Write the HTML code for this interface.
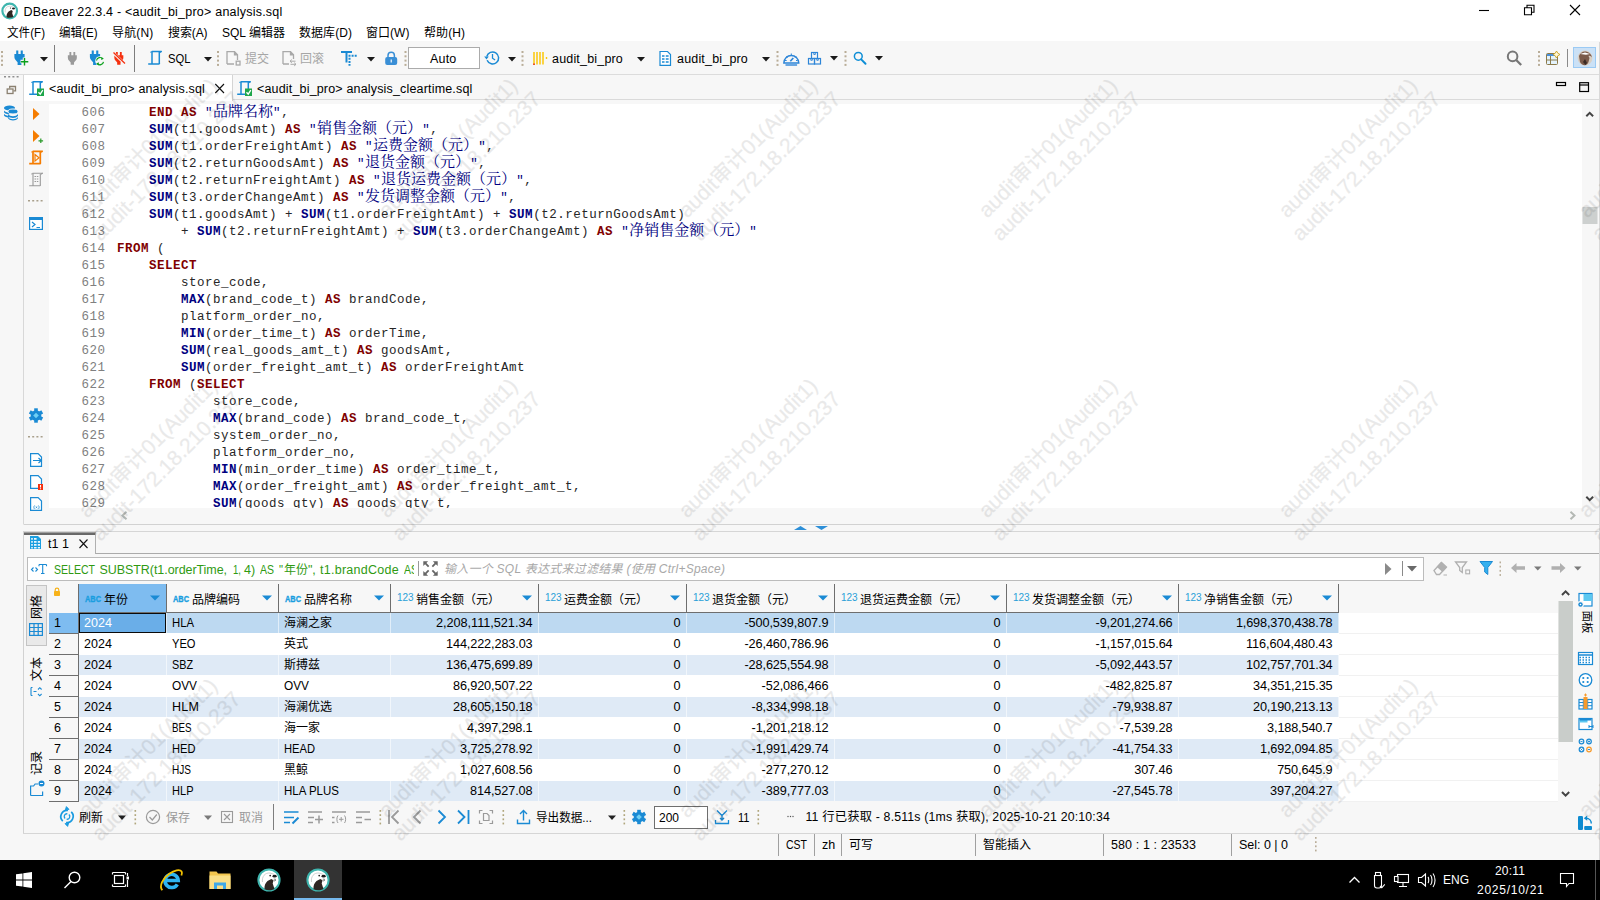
<!DOCTYPE html>
<html lang="zh">
<head>
<meta charset="utf-8">
<title>DBeaver 22.3.4 - &lt;audit_bi_pro&gt; analysis.sql</title>
<style>
*{box-sizing:border-box;margin:0;padding:0}
html,body{width:1600px;height:900px;overflow:hidden;background:#f7f7f7}
body{position:relative;font-family:"Liberation Sans","Noto Sans CJK SC",sans-serif;font-size:12.5px;color:#000}
.a{position:absolute}
.t{position:absolute;white-space:pre;line-height:16px;height:16px}
svg{position:absolute;overflow:visible}
#title{left:0;top:0;width:1600px;height:22px;background:#fff}
#menu{left:0;top:22px;width:1600px;height:19px;background:#fff}
#toolbarbg{left:0;top:41px;width:1600px;height:34px;background:#f7f7f7;border-bottom:1px solid #dcdcdc}
.g{color:#a0a0a0}
#tabs{left:24px;top:75px;width:1576px;height:25px;background:#f7f7f7;border-bottom:1px solid #dadada}
#tab1{left:24px;top:75px;width:209px;height:26px;background:#fff;border-right:1px solid #d4d4d4}
#editor{left:49px;top:104px;width:1533px;height:404px;background:#fff;overflow:hidden}
#code{font-family:"Liberation Mono","Noto Serif CJK SC",monospace;font-size:12.5px;letter-spacing:.5px;color:#262626}
.cl{position:absolute;left:0;height:17px;line-height:17px;white-space:pre;width:1500px}
.cl .n{display:inline-block;width:56.5px;text-align:right;color:#808080;margin-right:11.5px}
.k{color:#800000;font-weight:bold}
.f{color:#000080;font-weight:bold}
.s{color:#000080}
.z{font-family:"Noto Serif CJK SC",serif;font-size:15px;letter-spacing:0;line-height:0}
#taskbar{left:0;top:860px;width:1600px;height:40px;background:#000}
.wm{position:absolute;width:300px;height:60px;transform:rotate(-45deg);color:#000;-webkit-text-stroke:.28px #000;opacity:.082;font-size:21.2px;line-height:25.5px;white-space:pre;pointer-events:none;text-align:center;font-family:"Liberation Sans","Noto Sans CJK SC",sans-serif}

</style>
</head>
<body>
<div id="title" class="a">
<svg style="left:1px;top:2px" width="18" height="18" viewBox="0 0 18 18"><circle cx="8.700" cy="9" r="7.300" fill="#fff" stroke="#3fb5ae" stroke-width="2.200"/><path d="M5.600 15.200c-.2-2.400.5-4.300 2-5.700l2.600-1.400 1.500.8-.5 2.300 1.200 3.800c-2 1-4.800 1.100-6.800.2z" fill="#2e2622"/><ellipse cx="12.500" cy="6.400" rx="1.500" ry="1" fill="#1c1c1c"/><circle cx="9.500" cy="6" r=".6" fill="#1c1c1c"/><path d="M4.200 10.400c-.6-3.800 1.700-6.500 5.200-6.200l2.700.9" fill="none" stroke="#c4c4c4" stroke-width=".7"/></svg>
<span class="t" style="left:23.5px;top:4px;letter-spacing:0.208px;">DBeaver 22.3.4 - </span>
<span class="t" style="left:125px;top:4px;letter-spacing:0.222px;">&lt;audit_bi_pro&gt; analysis.sql</span>
<svg style="left:0;top:0" width="1600" height="22" viewBox="0 0 1600 22" fill="none" stroke="#000" stroke-width="1.100"><path d="M1479 10.500h10"/><path d="M1524.500 7.700h7v7h-7zM1527 7.700V5.200h7v7h-2.500"/><path d="M1570 5l10 10M1580 5l-10 10"/></svg>
</div>
<div id="menu" class="a">
<span class="t" style="left:7px;top:2.7px;font-size:12px;transform:scaleX(0.966);transform-origin:0 0;">文件(F)</span>
<span class="t" style="left:59px;top:2.7px;font-size:12px;transform:scaleX(0.963);transform-origin:0 0;">编辑(E)</span>
<span class="t" style="left:112px;top:2.7px;font-size:12px;letter-spacing:0.166px;">导航(N)</span>
<span class="t" style="left:168px;top:2.7px;font-size:12px;letter-spacing:-0.1px;">搜索(A)</span>
<span class="t" style="left:222px;top:2.7px;font-size:12px;letter-spacing:0.013px;">SQL 编辑器</span>
<span class="t" style="left:299px;top:2.7px;font-size:12px;letter-spacing:0.055px;">数据库(D)</span>
<span class="t" style="left:366px;top:2.7px;font-size:12px;letter-spacing:0.034px;">窗口(W)</span>
<span class="t" style="left:424px;top:2.7px;font-size:12px;letter-spacing:0.066px;">帮助(H)</span>
</div>
<div id="toolbarbg" class="a"></div>
<svg style="left:0;top:0" width="1600" height="75" viewBox="0 0 1600 75"><rect x="1" y="51.0" width="2" height="2" fill="#b9ad98"/><rect x="1" y="55.3" width="2" height="2" fill="#b9ad98"/><rect x="1" y="59.6" width="2" height="2" fill="#b9ad98"/><rect x="1" y="63.9" width="2" height="2" fill="#b9ad98"/><g transform="translate(14,50.500)"><path d="M2.200 0h2.100v3.600h2.400V0h2.100v3.600h1.800v3.200c0 2.400-2.200 3.400-3.200 5v2.700h-3.800v-2.700c-1-1.600-3.200-2.600-3.200-5V3.600h1.800z" fill="#1a8ad4"/></g><path d="M24.500 57.500v8M20.500 61.500h8" stroke="#f7f7f7" stroke-width="3.500"/><path d="M24.500 58v7.500M20.800 61.700h7.500" stroke="#0aa01c" stroke-width="1.400"/><path d="M40 57h8l-4 4.500z" fill="#1a1a1a"/><path d="M54.500 45v27M134.500 45v27" stroke="#7d7d7d" stroke-width="1"/><g transform="translate(67.500,52) scale(.88)"><path d="M2.200 0h2.100v3.600h2.400V0h2.100v3.600h1.800v3.200c0 2.400-2.200 3.400-3.200 5v2.700h-3.800v-2.700c-1-1.600-3.200-2.600-3.200-5V3.600h1.800z" fill="#9a9a9a"/></g><g transform="translate(89.500,50.500)"><path d="M2.200 0h2.100v3.600h2.400V0h2.100v3.600h1.800v3.200c0 2.400-2.200 3.400-3.200 5v2.700h-3.800v-2.700c-1-1.600-3.200-2.600-3.200-5V3.600h1.800z" fill="#1a8ad4"/></g><circle cx="100" cy="61" r="4.800" fill="#f7f7f7"/><path d="M96.500 60.500a3.600 3.600 0 0 1 6.300-1.700M103.500 61.800a3.600 3.600 0 0 1-6.300 1.700" fill="none" stroke="#0aa01c" stroke-width="1.200"/><path d="M101.500 57l2.300 1.800-2.700 1.200zM98.500 65.200l-2.300-1.800 2.700-1.200z" fill="#0aa01c"/><g transform="translate(114,52) scale(.88)"><path d="M2.200 0h2.100v3.600h2.400V0h2.100v3.600h1.800v3.200c0 2.400-2.200 3.400-3.200 5v2.700h-3.800v-2.700c-1-1.600-3.200-2.600-3.200-5V3.600h1.800z" fill="#f5300f"/></g><path d="M113 52.500l12.500 12" stroke="#f7f7f7" stroke-width="2.600"/><path d="M113.500 52.500l11.500 11" stroke="#f5300f" stroke-width="1.300"/><g transform="translate(148,50.7)" fill="none" stroke="#1a8ad4" stroke-width="1.5"><path d="M3.800 .8H13.500M4 1v11.800M11.300 1.500v11M.2 13.200h10.500c.6 0 .8-.4.800-1"/><path d="M3.800 .8c-.8 0-1 .5-1 1.200M13.800 .5l-2 1.300" stroke-width="1.100"/></g><path d="M204 57h8l-4 4.500z" fill="#1a1a1a"/><rect x="217" y="51.0" width="2" height="2" fill="#b9ad98"/><rect x="217" y="55.3" width="2" height="2" fill="#b9ad98"/><rect x="217" y="59.6" width="2" height="2" fill="#b9ad98"/><rect x="217" y="63.9" width="2" height="2" fill="#b9ad98"/><g fill="none" stroke="#a9a9a9" stroke-width="1.300"><path d="M227 64V51.700h7.500l3 3V60M227 64h7"/><path d="M234.500 51.700v3.200h3.200" fill="#a9a9a9"/><rect x="236.200" y="61.200" width="3.800" height="3.800"/></g><g fill="none" stroke="#a9a9a9" stroke-width="1.300"><path d="M283 64V51.700h7.500l3 3V59M283 64h6"/><path d="M290.500 51.700v3.200h3.200" fill="#a9a9a9"/><path d="M290 61.200h5.500M291.800 59.600l-1.800 1.600 1.800 1.600M296 64.300h-5.500M294.200 62.700l1.800 1.600-1.800 1.600" stroke-width="1"/></g><path d="M341 52h11M346.500 52v10.500" stroke="#1a8ad4" stroke-width="2" fill="none"/><path d="M348.500 55.800h8.500M349.500 57.800v8" stroke="#1a8ad4" stroke-width="2" stroke-dasharray="2 1.100" fill="none"/><path d="M367 57h8l-4 4.500z" fill="#1a1a1a"/><path d="M388 58v-2.500a3.200 3.200 0 0 1 6.400 0V58" fill="none" stroke="#3a8fd6" stroke-width="1.500"/><rect x="385.200" y="57" width="12" height="8" rx="2" fill="#3a8fd6"/><rect x="390.600" y="59.500" width="1.300" height="3" fill="#e8f2fb"/><rect x="404.5" y="51.0" width="2" height="2" fill="#b9ad98"/><rect x="404.5" y="55.3" width="2" height="2" fill="#b9ad98"/><rect x="404.5" y="59.6" width="2" height="2" fill="#b9ad98"/><rect x="404.5" y="63.9" width="2" height="2" fill="#b9ad98"/><rect x="408.500" y="47.500" width="71" height="21" fill="#fff" stroke="#ababab"/><g fill="none" stroke="#1a8ad4"><path d="M486.800 56.500a6 6 0 1 1 .3 3.800" stroke-width="1.500"/><path d="M492.500 54v4.200l2.600 1.800" stroke-width="1.300"/><path d="M484.200 56.500h4.600l-2.300 3z" fill="#1a8ad4" stroke="none"/></g><path d="M508 57h8l-4 4.500z" fill="#1a1a1a"/><rect x="521.5" y="51.0" width="2" height="2" fill="#b9ad98"/><rect x="521.5" y="55.3" width="2" height="2" fill="#b9ad98"/><rect x="521.5" y="59.6" width="2" height="2" fill="#b9ad98"/><rect x="521.5" y="63.9" width="2" height="2" fill="#b9ad98"/><path d="M534 52v12.500M537 52v12.500M540 52v12.500M543 52v12.500" stroke="#fcc80a" stroke-width="1.500"/><rect x="533.200" y="63.500" width="1.600" height="1.500" fill="#e8301a"/><rect x="545.800" y="57" width="1.400" height="2" fill="#fcc80a"/><path d="M637 57h8l-4 4.500z" fill="#1a1a1a"/><path d="M660 51.500h7.500l3 3v10.800h-10.500z" fill="#fff" stroke="#1a8ad4" stroke-width="1.200"/><path d="M662 56h2.500M662 59h2.500M662 62h2.500M665.800 56h2.800M665.800 59h2.800M665.800 62h2.800" stroke="#1a8ad4" stroke-width="1.300"/><path d="M762 57h8l-4 4.500z" fill="#1a1a1a"/><rect x="776.5" y="51.0" width="2" height="2" fill="#b9ad98"/><rect x="776.5" y="55.3" width="2" height="2" fill="#b9ad98"/><rect x="776.5" y="59.6" width="2" height="2" fill="#b9ad98"/><rect x="776.5" y="63.9" width="2" height="2" fill="#b9ad98"/><g fill="none" stroke="#2d85d8" stroke-width="1.400"><path d="M783.800 63a7.500 7.500 0 1 1 15 0z"/><path d="M785.500 65h11.600"/><path d="M791.300 53.500v2M786.300 56.300l1.200 1.200M796.300 56.300l-1.200 1.200M785 60.500h1.700M797.600 60.500H796" stroke-width="1"/><path d="M790.300 61.300l3-3.300" stroke-width="1.700"/></g><g fill="none" stroke="#2d85d8" stroke-width="1.200"><rect x="811.500" y="52.500" width="6" height="6"/><rect x="808.500" y="58.500" width="6" height="5.500"/><rect x="814.500" y="58.500" width="6" height="5.500"/><path d="M813.800 52.500v2h1.500v-2M810.800 58.500v1.800h1.500v-1.800M816.800 58.500v1.800h1.500v-1.800" stroke-width=".9"/></g><path d="M830 56h8l-4 4.500z" fill="#1a1a1a"/><rect x="844.5" y="51.0" width="2" height="2" fill="#b9ad98"/><rect x="844.5" y="55.3" width="2" height="2" fill="#b9ad98"/><rect x="844.5" y="59.6" width="2" height="2" fill="#b9ad98"/><rect x="844.5" y="63.9" width="2" height="2" fill="#b9ad98"/><circle cx="858.300" cy="56.300" r="3.900" fill="none" stroke="#0e8ed6" stroke-width="1.500"/><path d="M861.200 59.400l4.300 4.300" stroke="#0e8ed6" stroke-width="2" stroke-linecap="round"/><path d="M875 56h8l-4 4.500z" fill="#1a1a1a"/><circle cx="1512.600" cy="56.400" r="4.800" fill="none" stroke="#777" stroke-width="2"/><path d="M1516.200 60l5 5" stroke="#777" stroke-width="2.300"/><rect x="1538" y="51.0" width="2" height="2" fill="#b9ad98"/><rect x="1538" y="55.3" width="2" height="2" fill="#b9ad98"/><rect x="1538" y="59.6" width="2" height="2" fill="#b9ad98"/><rect x="1538" y="63.9" width="2" height="2" fill="#b9ad98"/><rect x="1546.500" y="53.500" width="11" height="11" rx="1" fill="#e4f3fc" stroke="#8c7a4a" stroke-width="1"/><rect x="1547" y="54" width="10" height="2" fill="#4a90d9"/><path d="M1550.500 56v8.500M1546.500 60h11" stroke="#8c7a4a" stroke-width="1"/><path d="M1556.500 51l1.300 2.200 2.200 1.300-2.200 1.300-1.300 2.200-1.300-2.200-2.200-1.300 2.200-1.300z" fill="#fff8d8" stroke="#c9a020" stroke-width=".9"/><path d="M1567.500 49v18" stroke="#8a8a8a" stroke-width="1"/><rect x="1573.500" y="47.500" width="22" height="20" fill="#cbe1f6" stroke="#9bcaf4" stroke-width="1"/><circle cx="1585" cy="58" r="7.400" fill="#d9cfc4"/><path d="M1579 56c1-3 4-5 7-4.500 3 .5 5.500 3 6 6-1-1.500-2.500-2-3.500-1.500l1 2-1 4c-.5 1.500-1.500 2.800-3.500 3.300-2.500-.3-4-1.500-5-3.300z" fill="#7a5a4a"/><path d="M1580 54l5-1.500 5 1.500-4 .8z" fill="#fff"/><path d="M1583 62l2-3 2 4-1.500 2z" fill="#3a2a24"/></svg>
<span class="t" style="left:167.5px;top:51px;transform:scaleX(0.899);transform-origin:0 0;">SQL</span>
<span class="t" style="left:245px;top:51px;font-size:12px;letter-spacing:-0.008px;color:#a6a6a6;">提交</span>
<span class="t" style="left:300px;top:51px;font-size:12px;letter-spacing:-0.008px;color:#a6a6a6;">回滚</span>
<span class="t" style="left:430px;top:51px;letter-spacing:0.195px;">Auto</span>
<span class="t" style="left:552px;top:51px;letter-spacing:0.182px;">audit_bi_pro</span>
<span class="t" style="left:677px;top:51px;letter-spacing:0.182px;">audit_bi_pro</span>
<div id="tabs" class="a"></div><div id="tab1" class="a"></div>
<div id="editor" class="a"><div id="code"><div class="cl" style="top:1px"><span class="n">606</span>    <span class="k">END</span> <span class="k">AS</span> <span class="s">"<span class="z">品牌名称</span>"</span>,</div>
<div class="cl" style="top:18px"><span class="n">607</span>    <span class="f">SUM</span>(t1.goodsAmt) <span class="k">AS</span> <span class="s">"<span class="z">销售金额（元）</span>"</span>,</div>
<div class="cl" style="top:35px"><span class="n">608</span>    <span class="f">SUM</span>(t1.orderFreightAmt) <span class="k">AS</span> <span class="s">"<span class="z">运费金额（元）</span>"</span>,</div>
<div class="cl" style="top:52px"><span class="n">609</span>    <span class="f">SUM</span>(t2.returnGoodsAmt) <span class="k">AS</span> <span class="s">"<span class="z">退货金额（元）</span>"</span>,</div>
<div class="cl" style="top:69px"><span class="n">610</span>    <span class="f">SUM</span>(t2.returnFreightAmt) <span class="k">AS</span> <span class="s">"<span class="z">退货运费金额（元）</span>"</span>,</div>
<div class="cl" style="top:86px"><span class="n">611</span>    <span class="f">SUM</span>(t3.orderChangeAmt) <span class="k">AS</span> <span class="s">"<span class="z">发货调整金额（元）</span>"</span>,</div>
<div class="cl" style="top:103px"><span class="n">612</span>    <span class="f">SUM</span>(t1.goodsAmt) + <span class="f">SUM</span>(t1.orderFreightAmt) + <span class="f">SUM</span>(t2.returnGoodsAmt)</div>
<div class="cl" style="top:120px"><span class="n">613</span>        + <span class="f">SUM</span>(t2.returnFreightAmt) + <span class="f">SUM</span>(t3.orderChangeAmt) <span class="k">AS</span> <span class="s">"<span class="z">净销售金额（元）</span>"</span></div>
<div class="cl" style="top:137px"><span class="n">614</span><span class="k">FROM</span> (</div>
<div class="cl" style="top:154px"><span class="n">615</span>    <span class="k">SELECT</span></div>
<div class="cl" style="top:171px"><span class="n">616</span>        store_code,</div>
<div class="cl" style="top:188px"><span class="n">617</span>        <span class="f">MAX</span>(brand_code_t) <span class="k">AS</span> brandCode,</div>
<div class="cl" style="top:205px"><span class="n">618</span>        platform_order_no,</div>
<div class="cl" style="top:222px"><span class="n">619</span>        <span class="f">MIN</span>(order_time_t) <span class="k">AS</span> orderTime,</div>
<div class="cl" style="top:239px"><span class="n">620</span>        <span class="f">SUM</span>(real_goods_amt_t) <span class="k">AS</span> goodsAmt,</div>
<div class="cl" style="top:256px"><span class="n">621</span>        <span class="f">SUM</span>(order_freight_amt_t) <span class="k">AS</span> orderFreightAmt</div>
<div class="cl" style="top:273px"><span class="n">622</span>    <span class="k">FROM</span> (<span class="k">SELECT</span></div>
<div class="cl" style="top:290px"><span class="n">623</span>            store_code,</div>
<div class="cl" style="top:307px"><span class="n">624</span>            <span class="f">MAX</span>(brand_code) <span class="k">AS</span> brand_code_t,</div>
<div class="cl" style="top:324px"><span class="n">625</span>            system_order_no,</div>
<div class="cl" style="top:341px"><span class="n">626</span>            platform_order_no,</div>
<div class="cl" style="top:358px"><span class="n">627</span>            <span class="f">MIN</span>(min_order_time) <span class="k">AS</span> order_time_t,</div>
<div class="cl" style="top:375px"><span class="n">628</span>            <span class="f">MAX</span>(order_freight_amt) <span class="k">AS</span> order_freight_amt_t,</div>
<div class="cl" style="top:392px"><span class="n">629</span>            <span class="f">SUM</span>(goods_qty) <span class="k">AS</span> goods_qty_t,</div></div></div>
<svg style="left:0;top:0" width="1600" height="535" viewBox="0 0 1600 535"><rect x="4.0" y="76" width="2" height="1.500" fill="#8f8f8f"/><rect x="8.2" y="76" width="2" height="1.500" fill="#8f8f8f"/><rect x="12.4" y="76" width="2" height="1.500" fill="#8f8f8f"/><rect x="16.6" y="76" width="2" height="1.500" fill="#8f8f8f"/><g fill="none" stroke="#8a8070" stroke-width="1.300"><path d="M9.700 88.500v-2h5.800v4.300h-2"/><rect x="7.200" y="89" width="5.800" height="4.500"/></g><g fill="#1a8ad4"><ellipse cx="9.500" cy="108" rx="5.500" ry="2.600"/><path d="M4 110.500c1 1.500 3 2 5.500 2v1.800c-2.500 0-4.500-.6-5.500-2zM4 113.800c1 1.500 3 2 5.500 2v1.800c-2.500 0-4.500-.6-5.500-2z"/><ellipse cx="13" cy="111.500" rx="5" ry="2.500" stroke="#f7f7f7" stroke-width="1"/><path d="M8 114c1 1.500 3 2.200 5 2.200s4-.7 5-2.200v1.800c-1 1.500-3 2.200-5 2.200s-4-.7-5-2.200zM8 117c1 1.500 3 2.200 5 2.200s4-.7 5-2.200v1.200c-1 1.500-3 2.200-5 2.200s-4-.7-5-2.200z"/></g><path d="M23.500 75V524" stroke="#d8d8d8" stroke-width="1"/><g transform="translate(29,81)" fill="none" stroke="#1a8ad4" stroke-width="1.5"><path d="M3.800 .8H13.500M4 1v11.800M11.300 1.500v11M.2 13.200h10.500c.6 0 .8-.4.800-1"/><path d="M3.800 .8c-.8 0-1 .5-1 1.200M13.800 .5l-2 1.300" stroke-width="1.100"/></g><rect x="37" y="88.5" width="7" height="7.500" fill="#1ea64a"/><path d="M38.5 92.2l1.700 1.900 2.600-4" fill="none" stroke="#fff" stroke-width="1.300"/><g transform="translate(237,81)" fill="none" stroke="#1a8ad4" stroke-width="1.5"><path d="M3.800 .8H13.500M4 1v11.800M11.300 1.500v11M.2 13.200h10.500c.6 0 .8-.4.800-1"/><path d="M3.800 .8c-.8 0-1 .5-1 1.200M13.800 .5l-2 1.300" stroke-width="1.100"/></g><rect x="245" y="88.5" width="7" height="7.500" fill="#1ea64a"/><path d="M246.5 92.2l1.700 1.900 2.600-4" fill="none" stroke="#fff" stroke-width="1.300"/><path d="M215.300 84l8.700 9M224 84l-8.700 9" stroke="#111" stroke-width="1.100" fill="none"/><rect x="1556.500" y="82.500" width="9" height="3" fill="none" stroke="#000" stroke-width="1.200"/><rect x="1579.700" y="82.700" width="8.800" height="8.800" fill="none" stroke="#000" stroke-width="1.200"/><path d="M1579.700 85h8.800" stroke="#000" stroke-width="1.200"/><path d="M33 108l6.500 6-6.500 6z" fill="#f57c00"/><path d="M33 130l6.500 6-6.500 6z" fill="#f57c00"/><path d="M40.800 138.500v4.500M38.500 140.800h4.600" stroke="#2a9a2a" stroke-width="1.200"/><g transform="translate(29,150.5)" fill="none" stroke="#f57c00" stroke-width="1.7"><path d="M3.800 .8H13.500M4 1v11.800M11.300 1.500v11M.2 13.200h10.500c.6 0 .8-.4.800-1"/><path d="M3.800 .8c-.8 0-1 .5-1 1.200M13.800 .5l-2 1.300" stroke-width="1.100"/></g><path d="M35 154.500l4 3.300-4 3.300z" fill="none" stroke="#f57c00" stroke-width="1.200"/><g transform="translate(29,172.5)" fill="none" stroke="#9a9a9a" stroke-width="1.1"><path d="M3.800 .8H13.500M4 1v11.800M11.300 1.500v11M.2 13.200h10.500c.6 0 .8-.4.800-1"/><path d="M3.800 .8c-.8 0-1 .5-1 1.200M13.800 .5l-2 1.300" stroke-width="1.100"/></g><path d="M34.500 176.500h4.500M34.500 179h4.500M34.500 181.500h4.500" stroke="#9a9a9a" stroke-width="1" stroke-dasharray="1.500 .8"/><rect x="28.0" y="200" width="2" height="1.500" fill="#a9a08c"/><rect x="32.2" y="200" width="2" height="1.500" fill="#a9a08c"/><rect x="36.4" y="200" width="2" height="1.500" fill="#a9a08c"/><rect x="40.6" y="200" width="2" height="1.500" fill="#a9a08c"/><rect x="29.600" y="217.600" width="12.800" height="11.800" fill="#fff" stroke="#1a8ad4" stroke-width="1.200"/><rect x="29" y="217" width="14" height="3" fill="#1a8ad4"/><path d="M32 222l3 2.500-3 2.500M36.500 227.500h3.500" fill="none" stroke="#1a8ad4" stroke-width="1.200"/><g transform="translate(36,415.500)" fill="#1a8ad4"><circle r="5.300"/><rect x="-1.800" y="-7.200" width="3.600" height="4" transform="rotate(0)"/><rect x="-1.800" y="-7.200" width="3.600" height="4" transform="rotate(60)"/><rect x="-1.800" y="-7.200" width="3.600" height="4" transform="rotate(120)"/><rect x="-1.800" y="-7.200" width="3.600" height="4" transform="rotate(180)"/><rect x="-1.800" y="-7.200" width="3.600" height="4" transform="rotate(240)"/><rect x="-1.800" y="-7.200" width="3.600" height="4" transform="rotate(300)"/><path d="M0-2.800l2.800 2.800-2.800 2.800-2.800-2.800z" fill="#6fd0f5"/></g><rect x="28.0" y="436" width="2" height="1.500" fill="#a9a08c"/><rect x="32.2" y="436" width="2" height="1.500" fill="#a9a08c"/><rect x="36.4" y="436" width="2" height="1.500" fill="#a9a08c"/><rect x="40.6" y="436" width="2" height="1.500" fill="#a9a08c"/><path d="M30.6 453.6h7.500l3.400 3.400v9.400h-10.900z" fill="#fff" stroke="#1a8ad4" stroke-width="1.200"/><path d="M33 460.500h8M38.500 458l2.800 2.500-2.800 2.500" fill="none" stroke="#1a8ad4" stroke-width="1.200"/><path d="M30.6 475.6h7.500l3.400 3.400v9.400h-10.900z" fill="#fff" stroke="#1a8ad4" stroke-width="1.200"/><rect x="38" y="484" width="5" height="6" fill="#f5300f"/><path d="M40.500 485v2.500M40.500 488.300v1" stroke="#fff" stroke-width="1.100"/><path d="M30.6 497.6h7.500l3.400 3.400v9.400h-10.900z" fill="#fff" stroke="#1a8ad4" stroke-width="1.200"/><path d="M34.500 505.500c-.8.800-.8 2.700 0 3.500M38.500 505.500c.8.800.8 2.700 0 3.500M35.700 506.500l1.600 1.600M37.300 506.500l-1.600 1.600" fill="none" stroke="#1a8ad4" stroke-width=".8"/><rect x="1582" y="104" width="16.500" height="404" fill="#f7f7f7"/><path d="M1586.300 116.300l3.400-3.400 3.400 3.400" fill="none" stroke="#444" stroke-width="2"/><path d="M1586.300 496.800l3.400 3.400 3.400-3.400" fill="none" stroke="#444" stroke-width="2"/><rect x="1582.500" y="207" width="15" height="17" fill="#cdd0cf"/><rect x="49" y="508" width="1533" height="16" fill="#f7f7f7"/><path d="M126.500 511.700l-4 3.800 4 3.800" fill="none" stroke="#b4b8b4" stroke-width="2"/><path d="M1570.500 511.700l4 3.800-4 3.800" fill="none" stroke="#b4b8b4" stroke-width="2"/><path d="M23.500 524.500H1599" stroke="#d2d2d2" stroke-width="1"/><path d="M1599.500 42V860" stroke="#d9d9d9" stroke-width="1"/><path d="M794 530l6.500-4 6.500 4zM815 526h13l-6.500 4z" fill="#2d8fd8"/></svg>
<span class="t" style="left:49px;top:81px;letter-spacing:0.167px;">&lt;audit_bi_pro&gt; analysis.sql</span>
<span class="t" style="left:257px;top:81px;letter-spacing:0.171px;">&lt;audit_bi_pro&gt; analysis_cleartime.sql</span>
<div class="a" style="left:24px;top:531px;width:1575px;height:1px;background:#d6d6d6"></div>
<div class="a" style="left:24px;top:532px;width:72px;height:22px;background:#f7f7f7;border-right:1px solid #b0b0b0"></div><div class="a" style="left:24px;top:532px;width:71px;height:3px;background:linear-gradient(#bdbdbd,#6a6a6a 45%,#666)"></div>
<div class="a" style="left:96px;top:553px;width:1503px;height:1px;background:#ababab"></div>
<div class="a" style="left:23px;top:531px;width:1px;height:303px;background:#d2d2d2"></div>
<div class="a" style="left:23px;top:833px;width:1577px;height:1px;background:#d6d6d6"></div>
<div class="a" style="left:27px;top:557px;width:1397px;height:24px;background:#fff;border:1px solid #bcbcbc"></div>
<div class="a" style="left:26px;top:585px;width:21px;height:61px;background:#e9e9e9;border:1px solid #c4c4c4"></div>
<div class="a" style="left:79px;top:613px;width:1479px;height:188px;background:#fff"></div>
<div class="a" style="left:79px;top:613px;width:1260px;height:20px;background:#bdd9f1"></div>
<div class="a" style="left:1339px;top:633px;width:219px;height:1px;background:#f1f1f1"></div>
<div class="a" style="left:1339px;top:654px;width:219px;height:1px;background:#f1f1f1"></div>
<div class="a" style="left:79px;top:655px;width:1260px;height:20px;background:#dfeaf6"></div>
<div class="a" style="left:1339px;top:675px;width:219px;height:1px;background:#f1f1f1"></div>
<div class="a" style="left:1339px;top:696px;width:219px;height:1px;background:#f1f1f1"></div>
<div class="a" style="left:79px;top:697px;width:1260px;height:20px;background:#dfeaf6"></div>
<div class="a" style="left:1339px;top:717px;width:219px;height:1px;background:#f1f1f1"></div>
<div class="a" style="left:1339px;top:738px;width:219px;height:1px;background:#f1f1f1"></div>
<div class="a" style="left:79px;top:739px;width:1260px;height:20px;background:#dfeaf6"></div>
<div class="a" style="left:1339px;top:759px;width:219px;height:1px;background:#f1f1f1"></div>
<div class="a" style="left:1339px;top:780px;width:219px;height:1px;background:#f1f1f1"></div>
<div class="a" style="left:79px;top:781px;width:1260px;height:20px;background:#dfeaf6"></div>
<div class="a" style="left:1339px;top:801px;width:219px;height:1px;background:#f1f1f1"></div>
<div class="a" style="left:166px;top:613px;width:1px;height:188px;background:rgba(255,255,255,.55)"></div>
<div class="a" style="left:278px;top:613px;width:1px;height:188px;background:rgba(255,255,255,.55)"></div>
<div class="a" style="left:390px;top:613px;width:1px;height:188px;background:rgba(255,255,255,.55)"></div>
<div class="a" style="left:538px;top:613px;width:1px;height:188px;background:rgba(255,255,255,.55)"></div>
<div class="a" style="left:686px;top:613px;width:1px;height:188px;background:rgba(255,255,255,.55)"></div>
<div class="a" style="left:834px;top:613px;width:1px;height:188px;background:rgba(255,255,255,.55)"></div>
<div class="a" style="left:1006px;top:613px;width:1px;height:188px;background:rgba(255,255,255,.55)"></div>
<div class="a" style="left:1178px;top:613px;width:1px;height:188px;background:rgba(255,255,255,.55)"></div>
<div class="a" style="left:1338px;top:613px;width:1px;height:188px;background:rgba(255,255,255,.55)"></div>
<div class="a" style="left:49px;top:612px;width:30px;height:190px;background:#f7f7f7;border-right:1px solid #6e6e6e"></div>
<div class="a" style="left:49px;top:613px;width:29px;height:20px;background:#7ebcf0"></div>
<div class="a" style="left:49px;top:633px;width:30px;height:1px;background:#6e6e6e"></div>
<div class="a" style="left:49px;top:654px;width:30px;height:1px;background:#6e6e6e"></div>
<div class="a" style="left:49px;top:675px;width:30px;height:1px;background:#6e6e6e"></div>
<div class="a" style="left:49px;top:696px;width:30px;height:1px;background:#6e6e6e"></div>
<div class="a" style="left:49px;top:717px;width:30px;height:1px;background:#6e6e6e"></div>
<div class="a" style="left:49px;top:738px;width:30px;height:1px;background:#6e6e6e"></div>
<div class="a" style="left:49px;top:759px;width:30px;height:1px;background:#6e6e6e"></div>
<div class="a" style="left:49px;top:780px;width:30px;height:1px;background:#6e6e6e"></div>
<div class="a" style="left:49px;top:801px;width:30px;height:1px;background:#6e6e6e"></div>
<div class="a" style="left:79px;top:584px;width:88px;height:28px;background:#7ebcf0"></div>
<div class="a" style="left:78px;top:584px;width:1261px;height:29px;border-bottom:1px solid #6e6e6e"></div>
<div class="a" style="left:78px;top:584px;width:1px;height:29px;background:#6e6e6e"></div>
<div class="a" style="left:166px;top:584px;width:1px;height:29px;background:#6e6e6e"></div>
<div class="a" style="left:278px;top:584px;width:1px;height:29px;background:#6e6e6e"></div>
<div class="a" style="left:390px;top:584px;width:1px;height:29px;background:#6e6e6e"></div>
<div class="a" style="left:538px;top:584px;width:1px;height:29px;background:#6e6e6e"></div>
<div class="a" style="left:686px;top:584px;width:1px;height:29px;background:#6e6e6e"></div>
<div class="a" style="left:834px;top:584px;width:1px;height:29px;background:#6e6e6e"></div>
<div class="a" style="left:1006px;top:584px;width:1px;height:29px;background:#6e6e6e"></div>
<div class="a" style="left:1178px;top:584px;width:1px;height:29px;background:#6e6e6e"></div>
<div class="a" style="left:1338px;top:584px;width:1px;height:29px;background:#6e6e6e"></div>
<div class="a" style="left:79px;top:613px;width:87px;height:20px;background:#6aaee8;border:1px solid #0a0a0a"></div>
<span class="t" style="left:85px;top:590.5px;font-size:9px;transform:scaleX(0.821);transform-origin:0 0;color:#1a9ee0;font-weight:bold;-webkit-text-stroke:.35px #1a9ee0;">ABC</span>
<span class="t" style="left:104px;top:591.5px;font-size:12px;letter-spacing:-0.008px;">年份</span>
<span class="t" style="left:173px;top:590.5px;font-size:9px;transform:scaleX(0.821);transform-origin:0 0;color:#1a9ee0;font-weight:bold;-webkit-text-stroke:.35px #1a9ee0;">ABC</span>
<span class="t" style="left:192px;top:591.5px;font-size:12px;letter-spacing:-0.004px;">品牌编码</span>
<span class="t" style="left:285px;top:590.5px;font-size:9px;transform:scaleX(0.821);transform-origin:0 0;color:#1a9ee0;font-weight:bold;-webkit-text-stroke:.35px #1a9ee0;">ABC</span>
<span class="t" style="left:304px;top:591.5px;font-size:12px;letter-spacing:-0.004px;">品牌名称</span>
<span class="t" style="left:397px;top:589.5px;font-size:10px;letter-spacing:-0.062px;color:#2a9fd8;">123</span>
<span class="t" style="left:416px;top:591.5px;font-size:12px;letter-spacing:-0.002px;">销售金额（元）</span>
<span class="t" style="left:545px;top:589.5px;font-size:10px;letter-spacing:-0.062px;color:#2a9fd8;">123</span>
<span class="t" style="left:564px;top:591.5px;font-size:12px;letter-spacing:-0.002px;">运费金额（元）</span>
<span class="t" style="left:693px;top:589.5px;font-size:10px;letter-spacing:-0.062px;color:#2a9fd8;">123</span>
<span class="t" style="left:712px;top:591.5px;font-size:12px;letter-spacing:-0.002px;">退货金额（元）</span>
<span class="t" style="left:841px;top:589.5px;font-size:10px;letter-spacing:-0.062px;color:#2a9fd8;">123</span>
<span class="t" style="left:860px;top:591.5px;font-size:12px;letter-spacing:-0.002px;">退货运费金额（元）</span>
<span class="t" style="left:1013px;top:589.5px;font-size:10px;letter-spacing:-0.062px;color:#2a9fd8;">123</span>
<span class="t" style="left:1032px;top:591.5px;font-size:12px;letter-spacing:-0.002px;">发货调整金额（元）</span>
<span class="t" style="left:1185px;top:589.5px;font-size:10px;letter-spacing:-0.062px;color:#2a9fd8;">123</span>
<span class="t" style="left:1204px;top:591.5px;font-size:12px;letter-spacing:-0.002px;">净销售金额（元）</span>
<span class="t" style="left:54px;top:614.5px;">1</span>
<span class="t" style="left:84px;top:614.5px;letter-spacing:0.047px;color:#fff;">2024</span>
<span class="t" style="left:172px;top:614.5px;transform:scaleX(0.904);transform-origin:0 0;">HLA</span>
<span class="t" style="left:284px;top:614.5px;font-size:12px;letter-spacing:-0.004px;">海澜之家</span>
<span class="t" style="left:435.9px;top:614.5px;font-size:12.7px;letter-spacing:-0.018px;">2,208,111,521.34</span>
<span class="t" style="left:673.5px;top:614.5px;font-size:12.7px;letter-spacing:-0.013px;">0</span>
<span class="t" style="left:744.4px;top:614.5px;font-size:12.7px;letter-spacing:-0.091px;">-500,539,807.9</span>
<span class="t" style="left:993.5px;top:614.5px;font-size:12.7px;letter-spacing:-0.013px;">0</span>
<span class="t" style="left:1095.5px;top:614.5px;font-size:12.7px;letter-spacing:-0.097px;">-9,201,274.66</span>
<span class="t" style="left:1235.9px;top:614.5px;font-size:12.7px;letter-spacing:-0.136px;">1,698,370,438.78</span>
<span class="t" style="left:54px;top:635.5px;">2</span>
<span class="t" style="left:84px;top:635.5px;letter-spacing:0.047px;">2024</span>
<span class="t" style="left:172px;top:635.5px;transform:scaleX(0.890);transform-origin:0 0;">YEO</span>
<span class="t" style="left:284px;top:635.5px;font-size:12px;letter-spacing:-0.008px;">英式</span>
<span class="t" style="left:446.0px;top:635.5px;font-size:12.7px;letter-spacing:-0.118px;">144,222,283.03</span>
<span class="t" style="left:673.5px;top:635.5px;font-size:12.7px;letter-spacing:-0.013px;">0</span>
<span class="t" style="left:744.4px;top:635.5px;font-size:12.7px;letter-spacing:-0.091px;">-26,460,786.96</span>
<span class="t" style="left:993.5px;top:635.5px;font-size:12.7px;letter-spacing:-0.013px;">0</span>
<span class="t" style="left:1095.5px;top:635.5px;font-size:12.7px;letter-spacing:-0.097px;">-1,157,015.64</span>
<span class="t" style="left:1246.0px;top:635.5px;font-size:12.7px;letter-spacing:-0.051px;">116,604,480.43</span>
<span class="t" style="left:54px;top:656.5px;">3</span>
<span class="t" style="left:84px;top:656.5px;letter-spacing:0.047px;">2024</span>
<span class="t" style="left:172px;top:656.5px;transform:scaleX(0.864);transform-origin:0 0;">SBZ</span>
<span class="t" style="left:284px;top:656.5px;font-size:12px;letter-spacing:-0.005px;">斯搏兹</span>
<span class="t" style="left:446.0px;top:656.5px;font-size:12.7px;letter-spacing:-0.118px;">136,475,699.89</span>
<span class="t" style="left:673.5px;top:656.5px;font-size:12.7px;letter-spacing:-0.013px;">0</span>
<span class="t" style="left:744.4px;top:656.5px;font-size:12.7px;letter-spacing:-0.091px;">-28,625,554.98</span>
<span class="t" style="left:993.5px;top:656.5px;font-size:12.7px;letter-spacing:-0.013px;">0</span>
<span class="t" style="left:1095.5px;top:656.5px;font-size:12.7px;letter-spacing:-0.097px;">-5,092,443.57</span>
<span class="t" style="left:1246.0px;top:656.5px;font-size:12.7px;letter-spacing:-0.118px;">102,757,701.34</span>
<span class="t" style="left:54px;top:677.5px;">4</span>
<span class="t" style="left:84px;top:677.5px;letter-spacing:0.047px;">2024</span>
<span class="t" style="left:172px;top:677.5px;transform:scaleX(0.947);transform-origin:0 0;">OVV</span>
<span class="t" style="left:284px;top:677.5px;transform:scaleX(0.947);transform-origin:0 0;">OVV</span>
<span class="t" style="left:453.0px;top:677.5px;font-size:12.7px;letter-spacing:-0.126px;">86,920,507.22</span>
<span class="t" style="left:673.5px;top:677.5px;font-size:12.7px;letter-spacing:-0.013px;">0</span>
<span class="t" style="left:761.5px;top:677.5px;font-size:12.7px;letter-spacing:-0.067px;">-52,086,466</span>
<span class="t" style="left:993.5px;top:677.5px;font-size:12.7px;letter-spacing:-0.013px;">0</span>
<span class="t" style="left:1105.5px;top:677.5px;font-size:12.7px;letter-spacing:-0.067px;">-482,825.87</span>
<span class="t" style="left:1253.0px;top:677.5px;font-size:12.7px;letter-spacing:-0.126px;">34,351,215.35</span>
<span class="t" style="left:54px;top:698.5px;">5</span>
<span class="t" style="left:84px;top:698.5px;letter-spacing:0.047px;">2024</span>
<span class="t" style="left:172px;top:698.5px;letter-spacing:0.198px;">HLM</span>
<span class="t" style="left:284px;top:698.5px;font-size:12px;letter-spacing:-0.004px;">海澜优选</span>
<span class="t" style="left:453.0px;top:698.5px;font-size:12.7px;letter-spacing:-0.126px;">28,605,150.18</span>
<span class="t" style="left:673.5px;top:698.5px;font-size:12.7px;letter-spacing:-0.013px;">0</span>
<span class="t" style="left:751.5px;top:698.5px;font-size:12.7px;letter-spacing:-0.097px;">-8,334,998.18</span>
<span class="t" style="left:993.5px;top:698.5px;font-size:12.7px;letter-spacing:-0.013px;">0</span>
<span class="t" style="left:1112.5px;top:698.5px;font-size:12.7px;letter-spacing:-0.072px;">-79,938.87</span>
<span class="t" style="left:1253.0px;top:698.5px;font-size:12.7px;letter-spacing:-0.126px;">20,190,213.13</span>
<span class="t" style="left:54px;top:719.5px;">6</span>
<span class="t" style="left:84px;top:719.5px;letter-spacing:0.047px;">2024</span>
<span class="t" style="left:172px;top:719.5px;transform:scaleX(0.780);transform-origin:0 0;">BES</span>
<span class="t" style="left:284px;top:719.5px;font-size:12px;letter-spacing:-0.005px;">海一家</span>
<span class="t" style="left:467.1px;top:719.5px;font-size:12.7px;letter-spacing:-0.148px;">4,397,298.1</span>
<span class="t" style="left:673.5px;top:719.5px;font-size:12.7px;letter-spacing:-0.013px;">0</span>
<span class="t" style="left:751.5px;top:719.5px;font-size:12.7px;letter-spacing:-0.097px;">-1,201,218.12</span>
<span class="t" style="left:993.5px;top:719.5px;font-size:12.7px;letter-spacing:-0.013px;">0</span>
<span class="t" style="left:1119.6px;top:719.5px;font-size:12.7px;letter-spacing:-0.081px;">-7,539.28</span>
<span class="t" style="left:1267.1px;top:719.5px;font-size:12.7px;letter-spacing:-0.148px;">3,188,540.7</span>
<span class="t" style="left:54px;top:740.5px;">7</span>
<span class="t" style="left:84px;top:740.5px;letter-spacing:0.047px;">2024</span>
<span class="t" style="left:172px;top:740.5px;transform:scaleX(0.890);transform-origin:0 0;">HED</span>
<span class="t" style="left:284px;top:740.5px;transform:scaleX(0.892);transform-origin:0 0;">HEAD</span>
<span class="t" style="left:460.1px;top:740.5px;font-size:12.7px;letter-spacing:-0.137px;">3,725,278.92</span>
<span class="t" style="left:673.5px;top:740.5px;font-size:12.7px;letter-spacing:-0.013px;">0</span>
<span class="t" style="left:751.5px;top:740.5px;font-size:12.7px;letter-spacing:-0.097px;">-1,991,429.74</span>
<span class="t" style="left:993.5px;top:740.5px;font-size:12.7px;letter-spacing:-0.013px;">0</span>
<span class="t" style="left:1112.5px;top:740.5px;font-size:12.7px;letter-spacing:-0.072px;">-41,754.33</span>
<span class="t" style="left:1260.0px;top:740.5px;font-size:12.7px;letter-spacing:-0.137px;">1,692,094.85</span>
<span class="t" style="left:54px;top:761.5px;">8</span>
<span class="t" style="left:84px;top:761.5px;letter-spacing:0.047px;">2024</span>
<span class="t" style="left:172px;top:761.5px;transform:scaleX(0.804);transform-origin:0 0;">HJS</span>
<span class="t" style="left:284px;top:761.5px;font-size:12px;letter-spacing:-0.008px;">黑鲸</span>
<span class="t" style="left:460.1px;top:761.5px;font-size:12.7px;letter-spacing:-0.137px;">1,027,608.56</span>
<span class="t" style="left:673.5px;top:761.5px;font-size:12.7px;letter-spacing:-0.013px;">0</span>
<span class="t" style="left:761.5px;top:761.5px;font-size:12.7px;letter-spacing:-0.067px;">-277,270.12</span>
<span class="t" style="left:993.5px;top:761.5px;font-size:12.7px;letter-spacing:-0.013px;">0</span>
<span class="t" style="left:1134.2px;top:761.5px;font-size:12.7px;letter-spacing:-0.094px;">307.46</span>
<span class="t" style="left:1277.2px;top:761.5px;font-size:12.7px;letter-spacing:-0.123px;">750,645.9</span>
<span class="t" style="left:54px;top:782.5px;">9</span>
<span class="t" style="left:84px;top:782.5px;letter-spacing:0.047px;">2024</span>
<span class="t" style="left:172px;top:782.5px;transform:scaleX(0.884);transform-origin:0 0;">HLP</span>
<span class="t" style="left:284px;top:782.5px;transform:scaleX(0.920);transform-origin:0 0;">HLA PLUS</span>
<span class="t" style="left:470.1px;top:782.5px;font-size:12.7px;letter-spacing:-0.11px;">814,527.08</span>
<span class="t" style="left:673.5px;top:782.5px;font-size:12.7px;letter-spacing:-0.013px;">0</span>
<span class="t" style="left:761.5px;top:782.5px;font-size:12.7px;letter-spacing:-0.067px;">-389,777.03</span>
<span class="t" style="left:993.5px;top:782.5px;font-size:12.7px;letter-spacing:-0.013px;">0</span>
<span class="t" style="left:1112.5px;top:782.5px;font-size:12.7px;letter-spacing:-0.072px;">-27,545.78</span>
<span class="t" style="left:1270.1px;top:782.5px;font-size:12.7px;letter-spacing:-0.11px;">397,204.27</span>
<svg style="left:0;top:0" width="1600" height="860" viewBox="0 0 1600 860"><path d="M30 536h8l3 3v10h-11z" fill="#1a9ee0"/><path d="M31.200 538h1.600v1.800h-1.600zM34 538h2.600v1.800H34zM31.200 541h1.600v1.800h-1.600zM34 541h2.600v1.800H34zM37.800 541h2.200v1.800h-2.200zM31.200 544h1.600v1.800h-1.600zM34 544h2.600v1.800H34zM37.800 544h2.200v1.800h-2.200zM31.200 547h1.600v1.500h-1.600zM34 547h2.600v1.500H34zM37.800 547h2.200v1.500h-2.200z" fill="#fff" opacity=".92"/><path d="M79.500 539.500l8 8.500M87.500 539.500l-8 8.500" stroke="#111" stroke-width="1.100" fill="none"/><g fill="none" stroke="#1a8ad4" stroke-width="1.100"><path d="M33.500 567.500l-2 2 2 2M35.500 567.500l2 2-2 2"/><path d="M39 564.500h7.500M42.700 564.500v9M41 573.500h3.500M39 564.500v1.800M46.500 564.500v1.800"/></g><g transform="translate(430.500,568.500)" fill="#666"><path d="M-7.200 -7.200h4.800l-1.700 1.700 2.900 2.900-1.300 1.300-2.900-2.900-1.800 1.800z"/><g transform="scale(-1,1)"><path d="M-7.200 -7.200h4.800l-1.700 1.700 2.900 2.900-1.300 1.300-2.900-2.900-1.800 1.800z"/></g><g transform="scale(1,-1)"><path d="M-7.200 -7.200h4.800l-1.700 1.700 2.900 2.900-1.300 1.300-2.900-2.900-1.800 1.800z"/></g><g transform="scale(-1,-1)"><path d="M-7.200 -7.200h4.800l-1.700 1.700 2.900 2.900-1.300 1.300-2.900-2.900-1.800 1.800z"/></g></g><path d="M418.500 561v15" stroke="#9a9a9a"/><path d="M1385 563l6.500 6-6.500 6z" fill="#8a8a8a"/><path d="M1402.500 561v15" stroke="#8a8a8a"/><path d="M1407 566h10l-5 5.500z" fill="#6a6a6a"/><g fill="none" stroke="#b0b0b0" stroke-width="1.300"><path d="M1434 570.500l7.500-8 5 4.500-7 7.500h-3z"/><path d="M1440 564l5 4.500" /><path d="M1441 563l5 4.500-3.500 3.700-5-4.500z" fill="#b0b0b0"/><path d="M1443.500 575h3.500" stroke-width="1"/></g><g fill="none" stroke="#b0b0b0" stroke-width="1.300"><path d="M1455.500 562h11l-4.200 5.500v5l-2.600-2v-3z"/><rect x="1465.800" y="570" width="3.800" height="3.800" stroke-width="1.100"/></g><path d="M1480 561.500h12.500l-4.700 6v7l-3.100-2.500v-4.500z" fill="#35b0ee" stroke="#1a8ad4" stroke-width="1"/><rect x="1499.500" y="561.5" width="1.500" height="1.800" fill="#b9ad98"/><rect x="1499.500" y="565.7" width="1.500" height="1.800" fill="#b9ad98"/><rect x="1499.500" y="569.9" width="1.500" height="1.800" fill="#b9ad98"/><rect x="1499.500" y="574.1" width="1.500" height="1.800" fill="#b9ad98"/><path d="M1511 568l5.500-5v3.300h8.500v3.400h-8.500v3.300z" fill="#b0b0b0"/><path d="M1534 566.500h7.500l-3.750 4z" fill="#7a7a7a"/><path d="M1565.500 568l-5.500-5v3.300h-8.500v3.400h8.500v3.300z" fill="#b0b0b0"/><path d="M1574 566.500h7.500l-3.750 4z" fill="#7a7a7a"/><path d="M55.200 591.500v-1.500a1.800 1.800 0 0 1 3.600 0v1.500" fill="none" stroke="#f7b21a" stroke-width="1.200"/><rect x="54" y="591" width="6" height="5" rx=".8" fill="#f7b21a"/><path d="M150 595.500h10l-5 5z" fill="#1a8ad4"/><path d="M262 595.500h10l-5 5z" fill="#1a8ad4"/><path d="M374 595.500h10l-5 5z" fill="#1a8ad4"/><path d="M522 595.500h10l-5 5z" fill="#1a8ad4"/><path d="M670 595.500h10l-5 5z" fill="#1a8ad4"/><path d="M818 595.500h10l-5 5z" fill="#1a8ad4"/><path d="M990 595.500h10l-5 5z" fill="#1a8ad4"/><path d="M1162 595.500h10l-5 5z" fill="#1a8ad4"/><path d="M1322 595.500h10l-5 5z" fill="#1a8ad4"/><g fill="none" stroke="#1a8ad4" stroke-width="1.200"><rect x="29.600" y="623.600" width="12.800" height="11.800"/><path d="M34 623.600v11.800M38.200 623.600v11.800M29.600 627.500h12.800M29.600 631.500h12.800"/></g><g fill="none" stroke="#1a8ad4" stroke-width="1.100"><path d="M31 687.500h1.500M31 687.500v8M31 695.500h1.500M33.500 691.500h3"/><path d="M38 689.500l1.800-1.800 1.800 1.800M38 694l1.800 1.800 1.800-1.800" /></g><g fill="none" stroke="#1a8ad4" stroke-width="1.200"><path d="M30.600 795.500v-9.500h3l1.500-2h3"/><path d="M30.600 795.500h12v-4"/></g><circle cx="41.500" cy="783.500" r="3" fill="#1a8ad4"/><path d="M40 783.500h3" stroke="#fff" stroke-width="1"/><rect x="1558" y="584" width="16" height="217" fill="#f7f7f7"/><rect x="1558.500" y="601" width="14.500" height="141" fill="#c9cdca"/><path d="M1562 595l3.600-3.600 3.600 3.600M1562 792l3.600 3.600 3.600-3.600" fill="none" stroke="#444" stroke-width="2"/><g transform="translate(-1.500,0)"><rect x="1580.500" y="593.500" width="13" height="12.500" fill="#fff" stroke="#1a8ad4" stroke-width="1.200"/><rect x="1585" y="594" width="8.500" height="7" fill="#5cc8f0"/><circle cx="1582" cy="604.500" r="3.400" fill="#f7f7f7"/><circle cx="1582" cy="604.500" r="2.200" fill="#1a8ad4"/><circle cx="1582" cy="604.500" r=".8" fill="#fff"/><rect x="1580" y="652.500" width="14" height="12" fill="#fff" stroke="#1a8ad4" stroke-width="1.200"/><path d="M1580 655h14" stroke="#1a8ad4" stroke-width="1.500"/><path d="M1581 657.500h12M1581 660h12M1581 662.500h12" stroke="#1a8ad4" stroke-width="1.300" stroke-dasharray="1.500 1.500"/><circle cx="1587" cy="680" r="6.300" fill="#fff" stroke="#1a8ad4" stroke-width="1.300"/><g fill="#1a8ad4"><circle cx="1584.800" cy="678" r="1.100"/><circle cx="1589.200" cy="678" r="1.100"/><circle cx="1584.800" cy="682" r="1.100"/><circle cx="1589.200" cy="682" r="1.100"/></g><rect x="1580.500" y="699.500" width="13" height="9.500" fill="#fff" stroke="#1a8ad4" stroke-width="1.200"/><path d="M1580.500 702.500h13M1580.500 705.700h13M1584.800 699.500v9.500M1589.200 699.500v9.500" stroke="#1a8ad4" stroke-width="1"/><rect x="1585" y="697" width="4" height="12" fill="#f79a2a"/><path d="M1587 693.500v3M1585.500 695h3" stroke="#f79a2a" stroke-width="1"/><rect x="1580.500" y="718.500" width="13" height="11" fill="#fff" stroke="#1a8ad4" stroke-width="1.200"/><rect x="1581" y="719" width="8" height="3.500" fill="#5cc8f0"/><rect x="1581" y="719" width="12" height="1.500" fill="#1a8ad4"/><path d="M1590.500 726.500h4M1590.500 725v3M1594.500 725v3" stroke="#1a8ad4" stroke-width="1"/><rect x="1589.500" y="722.500" width="5" height="7" fill="#f7f7f7" opacity=".0"/><g fill="none" stroke-width="1.200"><circle cx="1583" cy="741.500" r="2.300" stroke="#1a8ad4"/><circle cx="1590.500" cy="741.500" r="2.300" stroke="#1a8ad4"/><circle cx="1583" cy="749.500" r="2.300" stroke="#1a8ad4"/><circle cx="1590.500" cy="749.500" r="2.300" stroke="#f79a2a"/><path d="M1582 741.500h2M1589.500 741.500h2M1590.500 740.500v2M1582 748.500l2 2M1584 748.500l-2 2M1589.300 749.500h2.400" stroke-width=".9" stroke="#1a8ad4"/></g></g><rect x="1578" y="816" width="5" height="14" rx="1.300" fill="#0e8bd0"/><rect x="1584.200" y="826" width="7.800" height="4" rx=".9" fill="#0e8bd0"/><path d="M1591.300 823.500c0-3.200-2.300-5.200-5.300-5.200" fill="none" stroke="#0e8bd0" stroke-width="1.500"/><path d="M1583.800 818.200l3.400-2.600v5.200z" fill="#0e8bd0"/></svg>
<svg style="left:0;top:0" width="1600" height="860" viewBox="0 0 1600 860"><g transform="translate(67,816.500) rotate(-40)" fill="none" stroke="#1a9be0" stroke-width="1.700"><path d="M-6.200 .8a6.200 6.200 0 0 1 10.800-4.800"/><path d="M6.200 -.8a6.200 6.200 0 0 1-10.800 4.800"/><path d="M2.500 -5.800l3.600 1.600-.2-3.800z" fill="#1a9be0" stroke-width=".8"/><path d="M-2.500 5.800l-3.600-1.600.2 3.800z" fill="#1a9be0" stroke-width=".8"/><path d="M-2.800 .3a2.800 2.800 0 0 1 4.800-2.200M2.800 -.3a2.800 2.800 0 0 1-4.800 2.200" stroke-width="1.300"/></g><path d="M118 815.500h8l-4 4.500z" fill="#222"/><rect x="134.5" y="810.0" width="1.600" height="1.800" fill="#b0a67c"/><rect x="134.5" y="814.2" width="1.600" height="1.800" fill="#b0a67c"/><rect x="134.5" y="818.4" width="1.600" height="1.800" fill="#b0a67c"/><rect x="134.5" y="822.6" width="1.600" height="1.800" fill="#b0a67c"/><circle cx="153" cy="817" r="6.600" fill="none" stroke="#9a9a9a" stroke-width="1.200"/><path d="M149.500 817l2.800 3 4.500-5.500" fill="none" stroke="#9a9a9a" stroke-width="1.200"/><path d="M204 815.500h8l-4 4.500z" fill="#7a7a7a"/><rect x="221.500" y="811.500" width="11" height="11" fill="none" stroke="#9a9a9a" stroke-width="1.100"/><path d="M224 814l6 6M230 814l-6 6" stroke="#9a9a9a" stroke-width="1.100"/><path d="M273.500 804v26" stroke="#7d7d7d"/><path d="M284 812h14.500M284 817.500h10M284 822.500h6" stroke="#1a8ad4" stroke-width="1.700"/><path d="M292.500 823.500l6-6" stroke="#1a8ad4" stroke-width="2"/><path d="M308 812h14M308 817.500h6M308 822.500h5" stroke="#9a9a9a" stroke-width="1.600"/><path d="M319 815.500v8M315 819.500h8" stroke="#9a9a9a" stroke-width="1.500"/><path d="M332 812h14M332 817.500h2.500M332 822.500h2.500" stroke="#9a9a9a" stroke-width="1.500"/><path d="M338 815.500c-1.500 1.500-1.500 6 0 7.500M344.500 815.500c1.500 1.500 1.500 6 0 7.500M341.200 817v4.500M339 819.300h4.500" fill="none" stroke="#9a9a9a" stroke-width="1"/><path d="M356 812h14M356 817.500h6M356 822.500h6M364.500 819.500h6.500" stroke="#9a9a9a" stroke-width="1.600"/><rect x="379.5" y="810.0" width="1.600" height="1.800" fill="#b0a67c"/><rect x="379.5" y="814.2" width="1.600" height="1.800" fill="#b0a67c"/><rect x="379.5" y="818.4" width="1.600" height="1.800" fill="#b0a67c"/><rect x="379.5" y="822.6" width="1.600" height="1.800" fill="#b0a67c"/><g fill="none" stroke="#9a9a9a" stroke-width="1.800"><path d="M389 810v14M398.500 810.500l-6.500 6.500 6.500 6.500"/><path d="M420.500 810.500l-6.500 6.500 6.500 6.500"/></g><g fill="none" stroke="#1a8ad4" stroke-width="1.800"><path d="M438.500 810.500l6.500 6.500-6.500 6.500"/><path d="M458 810.500l6.500 6.500-6.500 6.500M468.500 810v14"/></g><g fill="none" stroke="#9a9a9a" stroke-width="1.200"><path d="M479.500 813.500v-3h3M489.500 810.500h3v3M492.500 820.500v3h-3M482.500 823.500h-3v-3"/><path d="M483.500 813.500h3.500l2 2v5h-5.500z"/></g><rect x="502.5" y="810.0" width="1.600" height="1.800" fill="#b0a67c"/><rect x="502.5" y="814.2" width="1.600" height="1.800" fill="#b0a67c"/><rect x="502.5" y="818.4" width="1.600" height="1.800" fill="#b0a67c"/><rect x="502.5" y="822.6" width="1.600" height="1.800" fill="#b0a67c"/><g fill="none" stroke="#1a8ad4" stroke-width="1.400"><path d="M517.500 819.500v4h12v-4"/><path d="M523.500 820.500v-9M520 814l3.500-3.500 3.500 3.500"/></g><path d="M608 815.500h8l-4 4.500z" fill="#222"/><rect x="623.5" y="810.0" width="1.600" height="1.800" fill="#b0a67c"/><rect x="623.5" y="814.2" width="1.600" height="1.800" fill="#b0a67c"/><rect x="623.5" y="818.4" width="1.600" height="1.800" fill="#b0a67c"/><rect x="623.5" y="822.6" width="1.600" height="1.800" fill="#b0a67c"/><g transform="translate(639,817)" fill="#1a8ad4"><circle r="5.300"/><rect x="-1.800" y="-7.200" width="3.600" height="4" transform="rotate(0)"/><rect x="-1.800" y="-7.200" width="3.600" height="4" transform="rotate(60)"/><rect x="-1.800" y="-7.200" width="3.600" height="4" transform="rotate(120)"/><rect x="-1.800" y="-7.200" width="3.600" height="4" transform="rotate(180)"/><rect x="-1.800" y="-7.200" width="3.600" height="4" transform="rotate(240)"/><rect x="-1.800" y="-7.200" width="3.600" height="4" transform="rotate(300)"/><path d="M0-2.800l2.800 2.800-2.800 2.800-2.800-2.800z" fill="#6fd0f5"/></g><rect x="654.500" y="806.500" width="53" height="22" fill="#fff" stroke="#6e6e6e"/><g fill="none" stroke="#1a8ad4" stroke-width="1.300"><path d="M715.500 820v3.500h13v-3.500"/><path d="M717 810.500l5 5 5-5M722 815.500v4.500M720 818l2 2 2-2"/></g><rect x="757.5" y="810.0" width="1.600" height="1.800" fill="#b0a67c"/><rect x="757.5" y="814.2" width="1.600" height="1.800" fill="#b0a67c"/><rect x="757.5" y="818.4" width="1.600" height="1.800" fill="#b0a67c"/><rect x="757.5" y="822.6" width="1.600" height="1.800" fill="#b0a67c"/><circle cx="788" cy="816.500" r=".7" fill="#555"/><circle cx="790.500" cy="816.500" r=".7" fill="#555"/><circle cx="793" cy="816.500" r=".7" fill="#555"/></svg>
<span class="t" style="left:48px;top:536px;letter-spacing:0.035px;">t1 1</span>
<span class="t" style="left:53.5px;top:561.5px;transform:scaleX(0.843);transform-origin:0 0;color:#2f9a12;">SELECT</span>
<span class="t" style="left:99.5px;top:561.5px;letter-spacing:-0.062px;color:#2f9a12;">SUBSTR(t1.orderTime,</span>
<span class="t" style="left:232.5px;top:561.5px;transform:scaleX(0.766);transform-origin:0 0;color:#2f9a12;">1,</span>
<span class="t" style="left:244px;top:561.5px;letter-spacing:-0.062px;color:#2f9a12;">4)</span>
<span class="t" style="left:260px;top:561.5px;transform:scaleX(0.839);transform-origin:0 0;color:#2f9a12;">AS</span>
<span class="t" style="left:279px;top:561.5px;transform:scaleX(0.901);transform-origin:0 0;color:#2f9a12;">&quot;</span>
<span class="t" style="left:308px;top:561.5px;letter-spacing:-0.211px;color:#2f9a12;">&quot;,</span>
<span class="t" style="left:320px;top:561.5px;letter-spacing:0.27px;color:#2f9a12;">t1.brandCode</span>
<span class="t" style="left:284px;top:561.5px;font-size:12px;letter-spacing:-0.008px;color:#2f9a12;">年份</span>
<span class="a" style="left:404px;top:558px;width:10px;height:22px;overflow:hidden"><span class="t" style="left:0px;top:3.5px;transform:scaleX(0.839);transform-origin:0 0;color:#2f9a12;">AS</span></span>
<span class="t" style="left:444px;top:561px;font-size:12px;letter-spacing:0.255px;color:#a8a8a8;font-style:italic;">输入一个 SQL 表达式来过滤结果 (使用 Ctrl+Space)</span>
<span class="t" style="left:6.5px;top:599px;width:60px;text-align:center;font-size:12px;color:#000;transform:rotate(-90deg)">网格</span>
<span class="t" style="left:6.5px;top:661px;width:60px;text-align:center;font-size:12px;color:#000;transform:rotate(-90deg)">文本</span>
<span class="t" style="left:6.5px;top:755px;width:60px;text-align:center;font-size:12px;color:#000;transform:rotate(-90deg)">记录</span>
<span class="t" style="left:1556.5px;top:613.5px;width:60px;text-align:center;font-size:11.5px;color:#000;transform:rotate(90deg)">面板</span>
<span class="t" style="left:79px;top:810px;font-size:12px;letter-spacing:-0.008px;">刷新</span>
<span class="t" style="left:166px;top:810px;font-size:12px;letter-spacing:-0.008px;color:#9a9a9a;">保存</span>
<span class="t" style="left:239px;top:810px;font-size:12px;letter-spacing:-0.008px;color:#9a9a9a;">取消</span>
<span class="t" style="left:536px;top:810px;font-size:12px;transform:scaleX(0.965);transform-origin:0 0;">导出数据...</span>
<span class="t" style="left:659px;top:810px;transform:scaleX(0.959);transform-origin:0 0;">200</span>
<span class="t" style="left:738px;top:810px;transform:scaleX(0.886);transform-origin:0 0;">11</span>
<span class="t" style="left:805.5px;top:808.5px;font-size:12.3px;letter-spacing:0.181px;">11 行已获取 - 8.511s (1ms 获取), 2025-10-21 20:10:34</span>
<svg style="left:0;top:0" width="1600" height="860" viewBox="0 0 1600 860"><path d="M778.5 834v22" stroke="#a0a0a0"/><path d="M814.5 834v22" stroke="#a0a0a0"/><path d="M841.5 834v22" stroke="#a0a0a0"/><path d="M975.5 834v22" stroke="#a0a0a0"/><path d="M1103.5 834v22" stroke="#a0a0a0"/><path d="M1231.5 834v22" stroke="#a0a0a0"/><rect x="1315" y="837.0" width="1.600" height="1.800" fill="#b9ad98"/><rect x="1315" y="841.2" width="1.600" height="1.800" fill="#b9ad98"/><rect x="1315" y="845.4" width="1.600" height="1.800" fill="#b9ad98"/><rect x="1315" y="849.6" width="1.600" height="1.800" fill="#b9ad98"/></svg>
<span class="t" style="left:786px;top:837px;transform:scaleX(0.840);transform-origin:0 0;">CST</span>
<span class="t" style="left:822px;top:837px;letter-spacing:-0.102px;">zh</span>
<span class="t" style="left:849px;top:837px;font-size:12px;letter-spacing:-0.008px;">可写</span>
<span class="t" style="left:983px;top:837px;font-size:12px;letter-spacing:-0.004px;">智能插入</span>
<span class="t" style="left:1111px;top:837px;letter-spacing:0.106px;">580 : 1 : 23533</span>
<span class="t" style="left:1239px;top:837px;letter-spacing:-0.011px;">Sel: 0 | 0</span>
<div id="taskbar" class="a"></div>
<div class="a" style="left:294px;top:860px;width:48px;height:40px;background:#333"></div><div class="a" style="left:294px;top:898px;width:48px;height:2px;background:#76b9ed"></div>
<svg style="left:0;top:0" width="1600" height="900" viewBox="0 0 1600 900"><path d="M16 874.300l6.500-.9v6.200H16zM23.300 873.300l8.700-1.300v7.600h-8.700zM16 880.400h6.500v6.200l-6.500-.9zM23.300 880.400H32v7.600l-8.700-1.300z" fill="#fff"/><circle cx="74.500" cy="877.500" r="5.300" fill="none" stroke="#fff" stroke-width="1.400"/><path d="M71 881.500l-6.500 6.500" stroke="#fff" stroke-width="1.400"/><g fill="none" stroke="#fff" stroke-width="1.200"><rect x="114.500" y="875.500" width="9" height="8"/><path d="M112.500 872.500h13M112.500 886.500h13M112.500 872.500v2M125.500 872.500v2M112.500 886.500v-2M125.500 886.500v-2M127.500 873v3M127.500 880v7"/></g><rect x="126.500" y="876.500" width="2.500" height="3" fill="#fff"/><path d="M177.300 884.300A6.600 6.600 0 1 1 178.200 880.500H165.500" fill="none" stroke="#2fb4f0" stroke-width="3.600"/><path d="M162.300 890.300c-3.500-4.500.5-12 7-16.500 5-3.500 10.500-5 12.300-2.300.6 1 .5 2.300-.2 4" fill="none" stroke="#f2c100" stroke-width="1.800"/><path d="M209.500 871.500h7l1.500 2h12.500v15.500h-21z" fill="#f3c64e"/><path d="M209.500 875.500h21v13.500h-21z" fill="#fbe087"/><path d="M214 889v-6.500h12v6.500h-3v-3.500h-6v3.500z" fill="#3fa9e8"/><circle cx="269" cy="880" r="10.600" fill="#fff" stroke="#3fb5ae" stroke-width="2"/><path d="M264.5 889.3c-.3-3.500.8-6.300 3-8.300l3.800-2 2.200 1.200-.8 3.300 1.800 5.500c-3 1.500-7 1.700-10 .3z" fill="#2e2622"/><ellipse cx="274.6" cy="876.2" rx="2.100" ry="1.400" fill="#1c1c1c"/><circle cx="270.2" cy="875.6" r=".85" fill="#1c1c1c"/><path d="M262.5 882c-.8-5.500 2.500-9.500 7.500-9l4 1.300" fill="none" stroke="#c4c4c4" stroke-width=".8"/><path d="M274.3 878.5v3M275.5 878.8v2.200" stroke="#777" stroke-width=".8"/><circle cx="318" cy="880" r="10.600" fill="#fff" stroke="#3fb5ae" stroke-width="2"/><path d="M313.5 889.3c-.3-3.500.8-6.300 3-8.300l3.800-2 2.200 1.200-.8 3.300 1.800 5.500c-3 1.500-7 1.700-10 .3z" fill="#2e2622"/><ellipse cx="323.6" cy="876.2" rx="2.100" ry="1.400" fill="#1c1c1c"/><circle cx="319.2" cy="875.6" r=".85" fill="#1c1c1c"/><path d="M311.5 882c-.8-5.500 2.500-9.500 7.500-9l4 1.300" fill="none" stroke="#c4c4c4" stroke-width=".8"/><path d="M323.3 878.5v3M324.5 878.8v2.200" stroke="#777" stroke-width=".8"/><path d="M1349.500 882.500l5-5 5 5" fill="none" stroke="#fff" stroke-width="1.300"/><g fill="none" stroke="#fff" stroke-width="1.100"><rect x="1375.500" y="872.500" width="5" height="3"/><path d="M1374.500 875.500h7v10c0 1.500-1 2.500-2.500 2.500h-2c-1.500 0-2.500-1-2.500-2.500z"/><path d="M1380 886l1.800 1.800 3-3.500"/></g><g fill="none" stroke="#fff" stroke-width="1.100"><rect x="1397.500" y="874.500" width="11" height="8"/><path d="M1403 882.500v3.500M1399 886.500h8"/><rect x="1394.500" y="876.500" width="3.500" height="5" fill="#000"/></g><g fill="none" stroke="#fff" stroke-width="1.100"><path d="M1418.500 877.500h3l4-3.500v12l-4-3.500h-3z"/><path d="M1428 877c1 1 1 5 0 6M1430.500 875c2 2.500 2 7.500 0 10M1433 873.500c2.700 3.500 2.700 10 0 13.500"/></g><path d="M1560.500 873.500h13v10h-4.500l-2.500 3v-3h-6z" fill="none" stroke="#fff" stroke-width="1.100"/><path d="M1595.500 860v40" stroke="#555"/></svg>
<span class="t" style="left:1443px;top:872px;font-size:12px;letter-spacing:-0.005px;color:#fff;">ENG</span>
<span class="t" style="left:1495px;top:862.5px;font-size:12px;letter-spacing:0.172px;color:#fff;">20:11</span>
<span class="t" style="left:1477px;top:881.5px;font-size:12px;letter-spacing:0.744px;color:#fff;">2025/10/21</span>
<div class="wm" style="left:10px;top:130px"><div>audit审计01(Audit1)</div><div>audit-172.18.210.237</div></div>
<div class="wm" style="left:310px;top:130px"><div>audit审计01(Audit1)</div><div>audit-172.18.210.237</div></div>
<div class="wm" style="left:610px;top:130px"><div>audit审计01(Audit1)</div><div>audit-172.18.210.237</div></div>
<div class="wm" style="left:910px;top:130px"><div>audit审计01(Audit1)</div><div>audit-172.18.210.237</div></div>
<div class="wm" style="left:1210px;top:130px"><div>audit审计01(Audit1)</div><div>audit-172.18.210.237</div></div>
<div class="wm" style="left:1510px;top:130px"><div>audit审计01(Audit1)</div><div>audit-172.18.210.237</div></div>
<div class="wm" style="left:10px;top:430px"><div>audit审计01(Audit1)</div><div>audit-172.18.210.237</div></div>
<div class="wm" style="left:310px;top:430px"><div>audit审计01(Audit1)</div><div>audit-172.18.210.237</div></div>
<div class="wm" style="left:610px;top:430px"><div>audit审计01(Audit1)</div><div>audit-172.18.210.237</div></div>
<div class="wm" style="left:910px;top:430px"><div>audit审计01(Audit1)</div><div>audit-172.18.210.237</div></div>
<div class="wm" style="left:1210px;top:430px"><div>audit审计01(Audit1)</div><div>audit-172.18.210.237</div></div>
<div class="wm" style="left:1510px;top:430px"><div>audit审计01(Audit1)</div><div>audit-172.18.210.237</div></div>
<div class="wm" style="left:10px;top:730px"><div>audit审计01(Audit1)</div><div>audit-172.18.210.237</div></div>
<div class="wm" style="left:310px;top:730px"><div>audit审计01(Audit1)</div><div>audit-172.18.210.237</div></div>
<div class="wm" style="left:610px;top:730px"><div>audit审计01(Audit1)</div><div>audit-172.18.210.237</div></div>
<div class="wm" style="left:910px;top:730px"><div>audit审计01(Audit1)</div><div>audit-172.18.210.237</div></div>
<div class="wm" style="left:1210px;top:730px"><div>audit审计01(Audit1)</div><div>audit-172.18.210.237</div></div>
<div class="wm" style="left:1510px;top:730px"><div>audit审计01(Audit1)</div><div>audit-172.18.210.237</div></div>
</body>
</html>
